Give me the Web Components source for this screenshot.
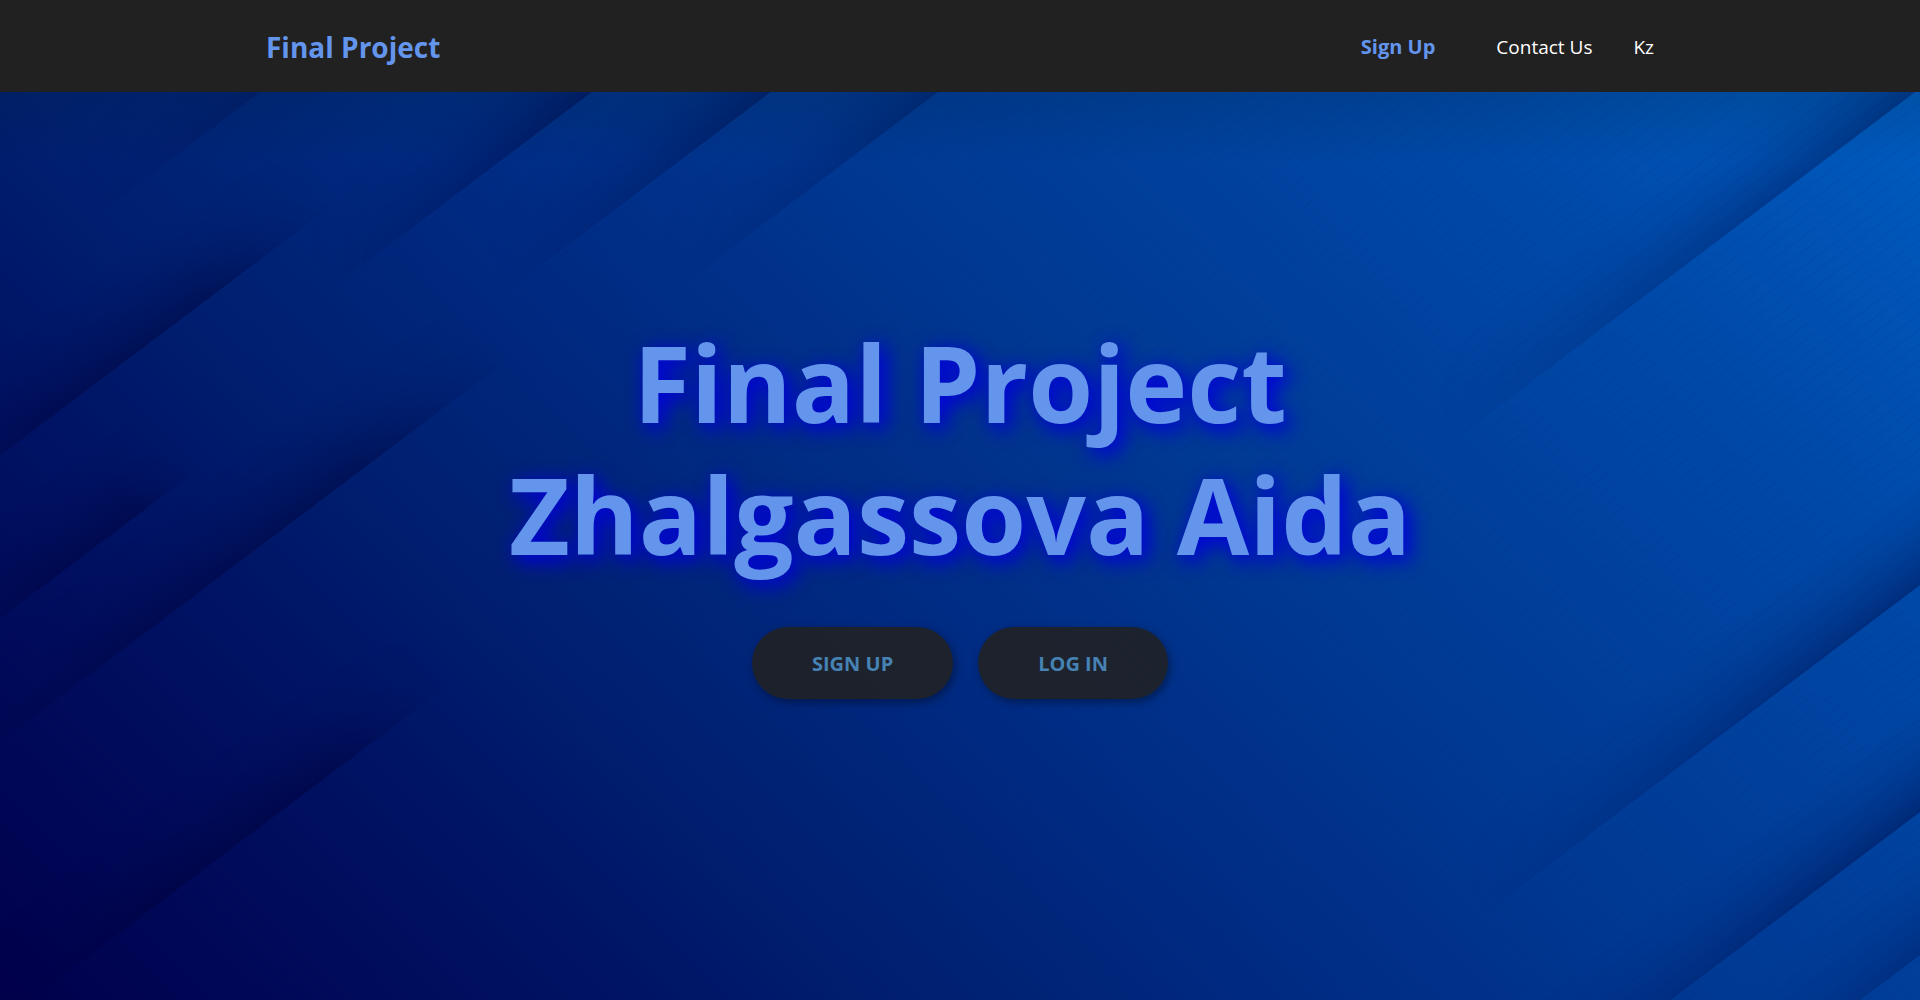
<!DOCTYPE html>
<html lang="en">
<head>
<meta charset="utf-8">
<title>Final Project</title>
<style>
  html, body { margin: 0; height: 100%; }
  body { font-family: "Segoe UI", "Open Sans", "Noto Sans", sans-serif; background: #000048; }
</style>
</head>
<body>
<app-page>
  <site-header slot="header">
    <nav-link slot="brand" href="#" variant="brand">Final Project</nav-link>
    <nav-link href="#signup" variant="accent">Sign Up</nav-link>
    <nav-link href="#contact">Contact Us</nav-link>
    <nav-link href="#kz">Kz</nav-link>
  </site-header>
  <hero-section>
    <span slot="title">Final Project<br>Zhalgassova Aida</span>
    <pill-button>SIGN UP</pill-button>
    <pill-button>LOG IN</pill-button>
  </hero-section>
</app-page>

<script>
const define = (name, html, setup) => {
  const tpl = document.createElement('template');
  tpl.innerHTML = html;
  customElements.define(name, class extends HTMLElement {
    constructor() {
      super();
      this.attachShadow({ mode: 'open' }).append(tpl.content.cloneNode(true));
    }
    connectedCallback() { if (setup) setup(this, this.shadowRoot); }
  });
};

define('app-page', `
  <style>
    :host { display: flex; flex-direction: column; min-height: 100vh; }
    main { flex: 1; display: flex; }
    ::slotted(hero-section) { flex: 1; }
  </style>
  <slot name="header"></slot>
  <main><slot></slot></main>`);

define('site-header', `
  <style>
    :host { display: block; background: #212121; position: relative; z-index: 1; }
    header { display: flex; align-items: center; justify-content: space-between; box-sizing: border-box;
      height: 92px; max-width: 1388px; margin: 0 auto; padding-top: 2px; }
    nav { display: flex; align-items: center; gap: 41px; }
    nav ::slotted([variant="accent"]) { margin-right: 20px; }
  </style>
  <header><slot name="brand"></slot><nav><slot></slot></nav></header>`);

define('nav-link', `
  <style>
    :host { display: block; }
    a { color: #fff; text-decoration: none; font-size: 19px; line-height: 28px; display: block; }
    :host([variant="accent"]) a { color: cornflowerblue; font-weight: 700; font-size: 20px; }
    :host([variant="brand"]) a { color: cornflowerblue; font-weight: 700; font-size: 28px; line-height: 40px; }
  </style>
  <a><slot></slot></a>`, (el, root) => {
    root.querySelector('a').href = el.getAttribute('href') || '#';
  });

define('pill-button', `
  <style>
    :host { display: block; }
    button { font: 700 20px/28px "Segoe UI", "Open Sans", "Noto Sans", sans-serif; color: steelblue;
      background: rgba(33, 33, 33, .88); border: 0; border-radius: 36px; padding: 23px 60px 21px;
      box-shadow: 2px 3px 8px rgba(0, 0, 0, .4); cursor: pointer; display: block; }
  </style>
  <button type="button"><slot></slot></button>`);

/* Each fold is [x, y, length, opacity, mask]: a shadow running down-left from (x, y). */
const FOLDS = [
  [260, 0, 210, .22, 'out'],
  [592, 0, 330, .44, 'out'],
  [771, 0, 330, .40, 'out'],
  [938, 0, 330, .30, 'out'],
  [330, 115, 540, .40, 'both'],
  [510, 266, 680, .40, 'both'],
  [200, 376, 300, .40, 'both'],
  [450, 592, 560, .42, 'both'],
  [1915, 0, 580, .40, 'out'],
  [1960, 463, 600, .42, 'out'],
  [1960, 690, 600, .42, 'out'],
  [1960, 833, 300, .32, 'out']
];
define('fold-backdrop', `
  <style>
    :host { display: block; }
    svg { display: block; width: 100%; height: 100%; }
  </style>
  <svg viewBox="0 0 1920 908" preserveAspectRatio="xMidYMid slice" aria-hidden="true">
    <defs>
      <linearGradient id="edge" x1="0" y1="0" x2="0" y2="1">
        <stop offset="0" stop-color="#000034"/>
        <stop offset=".25" stop-color="#000034" stop-opacity=".6"/>
        <stop offset=".6" stop-color="#000034" stop-opacity=".2"/>
        <stop offset="1" stop-color="#000034" stop-opacity="0"/>
      </linearGradient>
      <linearGradient id="fadeOut">
        <stop offset="0" stop-color="#fff"/><stop offset=".4" stop-color="#bbb"/><stop offset="1" stop-color="#000"/>
      </linearGradient>
      <linearGradient id="fadeBoth">
        <stop offset="0" stop-color="#000"/><stop offset=".12" stop-color="#555"/><stop offset=".28" stop-color="#fff"/>
        <stop offset=".65" stop-color="#ddd"/><stop offset="1" stop-color="#000"/>
      </linearGradient>
      <mask id="out" maskContentUnits="objectBoundingBox"><rect width="1" height="1" fill="url(#fadeOut)"/></mask>
      <mask id="both" maskContentUnits="objectBoundingBox"><rect width="1" height="1" fill="url(#fadeBoth)"/></mask>
      <pattern id="lines" width="12" height="12" patternUnits="userSpaceOnUse" patternTransform="rotate(-37)">
        <rect width="12" height="1" fill="#001a80"/>
      </pattern>
      <linearGradient id="lineFade"><stop offset="0" stop-color="#666"/><stop offset="1" stop-color="#fff"/></linearGradient>
      <mask id="lm"><rect width="1920" height="908" fill="url(#lineFade)"/></mask>
    </defs>
    <rect width="1920" height="908" fill="url(#lines)" opacity=".1" mask="url(#lm)"/>
    <g id="folds"></g>
  </svg>`, (el, root) => {
    root.getElementById('folds').innerHTML = FOLDS.map(([x, y, len, op, m]) =>
      `<g transform="translate(${x} ${y}) rotate(143)"><rect x="${m === 'out' ? -80 : 0}" width="${m === 'out' ? len + 80 : len}" height="84" fill="url(#edge)" opacity="${op}" mask="url(#${m})"/></g>`).join('');
  });

define('hero-section', `
  <style>
    :host { display: flex; align-items: center; justify-content: center; position: relative; overflow: hidden;
      background:
        linear-gradient(rgba(0, 30, 50, .18), rgba(0, 30, 50, 0) 70px),
        linear-gradient(45deg, #00004c, #001364 22%, #001f70 32%, #002c84 47%, #003993 61%, #0049a8 83%, #005cc0); }
    fold-backdrop { position: absolute; inset: 0; }
    .content { position: relative; text-align: center; padding-bottom: 76px; }
    h1 { margin: 0; font-size: 105px; line-height: 132px; font-weight: 700; color: cornflowerblue;
      text-shadow: 5px 5px 20px #0000e0, 5px 5px 20px rgba(0, 0, 205, .4); }
    .actions { display: flex; justify-content: center; gap: 25px; margin-top: 46px; }
  </style>
  <fold-backdrop></fold-backdrop>
  <div class="content">
    <h1><slot name="title"></slot></h1>
    <div class="actions"><slot></slot></div>
  </div>`);
</script>
</body>
</html>
